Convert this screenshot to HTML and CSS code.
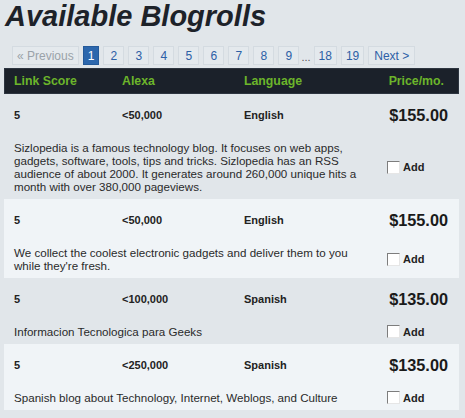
FILE: index.html
```html
<!DOCTYPE html>
<html>
<head>
<meta charset="utf-8">
<link rel="stylesheet" href="styles.css">
</head>
<body>
<div class="page">
  <h1 class="title">Available Blogrolls</h1>
  <div class="pager">
    <span class="pg prev">« Previous</span>
    <span class="pg active">1</span>
    <a class="pg num">2</a>
    <a class="pg num">3</a>
    <a class="pg num">4</a>
    <a class="pg num">5</a>
    <a class="pg num">6</a>
    <a class="pg num">7</a>
    <a class="pg num">8</a>
    <a class="pg num">9</a>
    <span class="dots">...</span>
    <a class="pg num">18</a>
    <a class="pg num">19</a>
    <a class="pg num next">Next &gt;</a>
  </div>
  <div class="table">
    <div class="thead">
      <span class="cell">Link Score</span>
      <span class="cell">Alexa</span>
      <span class="cell">Language</span>
      <span class="cell hprice">Price/mo.</span>
    </div>

    <div class="row">
      <div class="data">
        <span class="cell">5</span>
        <span class="cell">&lt;50,000</span>
        <span class="cell">English</span>
        <span class="cell price">$155.00</span>
      </div>
      <div class="detail">
        <p class="desc">Sizlopedia is a famous technology blog. It focuses on web apps, gadgets, software, tools, tips and tricks. Sizlopedia has an RSS audience of about 2000. It generates around 260,000 unique hits a month with over 380,000 pageviews.</p>
        <label class="add"><input type="checkbox" class="cb"><span>Add</span></label>
      </div>
    </div>

    <div class="row alt">
      <div class="data">
        <span class="cell">5</span>
        <span class="cell">&lt;50,000</span>
        <span class="cell">English</span>
        <span class="cell price">$155.00</span>
      </div>
      <div class="detail">
        <p class="desc">We collect the coolest electronic gadgets and deliver them to you while they're fresh.</p>
        <label class="add"><input type="checkbox" class="cb"><span>Add</span></label>
      </div>
    </div>

    <div class="row">
      <div class="data">
        <span class="cell">5</span>
        <span class="cell">&lt;100,000</span>
        <span class="cell">Spanish</span>
        <span class="cell price">$135.00</span>
      </div>
      <div class="detail">
        <p class="desc">Informacion Tecnologica para Geeks</p>
        <label class="add"><input type="checkbox" class="cb"><span>Add</span></label>
      </div>
    </div>

    <div class="row alt">
      <div class="data">
        <span class="cell">5</span>
        <span class="cell">&lt;250,000</span>
        <span class="cell">Spanish</span>
        <span class="cell price">$135.00</span>
      </div>
      <div class="detail">
        <p class="desc">Spanish blog about Technology, Internet, Weblogs, and Culture</p>
        <label class="add"><input type="checkbox" class="cb"><span>Add</span></label>
      </div>
    </div>
  </div>
</div>
</body>
</html>
```

FILE: styles.css
```css
html, body {
  margin: 0;
  padding: 0;
  background: #e1e6ea;
}
body {
  font-family: "Liberation Sans", Arial, sans-serif;
  color: #222;
}
.page {
  padding: 0 6px 0 4px;
}
.title {
  margin: 0;
  padding: 1px 0 0 1px;
  font-size: 29px;
  line-height: 30px;
  font-weight: bold;
  font-style: italic;
  color: #1d2229;
}
.pager {
  display: flex;
  align-items: center;
  gap: 4px;
  margin: 15px 0 0 8px;
  height: 19px;
  font-size: 12px;
}
.pg {
  box-sizing: border-box;
  height: 19px;
  display: inline-flex;
  align-items: center;
  justify-content: center;
  padding: 0 4px;
  border: 1px solid #d4dbe1;
  background: #e4e9ed;
  text-decoration: none;
}
.num {
  min-width: 21px;
  color: #2d60a6;
}
.next {
  padding: 0 5px;
}
.prev {
  color: #9aa2a9;
}
.active {
  background: #2c67ad;
  border-color: #245a9a;
  color: #fff;
}
.dots {
  margin: 0 -1px 0 -2px;
  color: #555;
  font-size: 11px;
  align-self: flex-end;
  line-height: 16px;
}
.table {
  margin-top: 3px;
}
.thead {
  display: grid;
  grid-template-columns: 108px 122px 1fr auto;
  align-items: center;
  height: 26px;
  box-sizing: border-box;
  background: #1b212a;
  border: 1px solid #2d3540;
  color: #6cb52a;
  font-size: 12.3px;
  font-weight: bold;
}
.thead .cell {
  padding-left: 9px;
}
.thead .hprice {
  padding: 0 14px 0 0;
}
.row {
  padding: 11px 0 6px;
}
.row.alt {
  background: #f0f4f7;
}
.data {
  display: grid;
  grid-template-columns: 108px 122px 1fr auto;
  align-items: center;
  height: 20px;
  font-size: 11px;
  font-weight: bold;
  color: #222;
}
.data .cell {
  padding-left: 10px;
}
.data .price {
  padding: 0 11px 0 0;
  font-size: 16.3px;
  color: #1a1a1a;
}
.detail {
  display: flex;
  align-items: center;
  margin-top: 16px;
}
.desc {
  margin: 0 0 0 10px;
  width: 362px;
  font-size: 11.6px;
  line-height: 13px;
  color: #2a2a2a;
}
.add {
  display: flex;
  align-items: center;
  margin-left: 11px;
  font-size: 11px;
  font-weight: bold;
  color: #222;
}
.cb {
  appearance: none;
  -webkit-appearance: none;
  margin: 0 3px 0 0;
  width: 13px;
  height: 13px;
  box-sizing: border-box;
  background: #fff;
  border-top: 1px solid #7d7d7d;
  border-left: 1px solid #7d7d7d;
  border-right: 1px solid #e6e6e6;
  border-bottom: 1px solid #e6e6e6;
}
```
